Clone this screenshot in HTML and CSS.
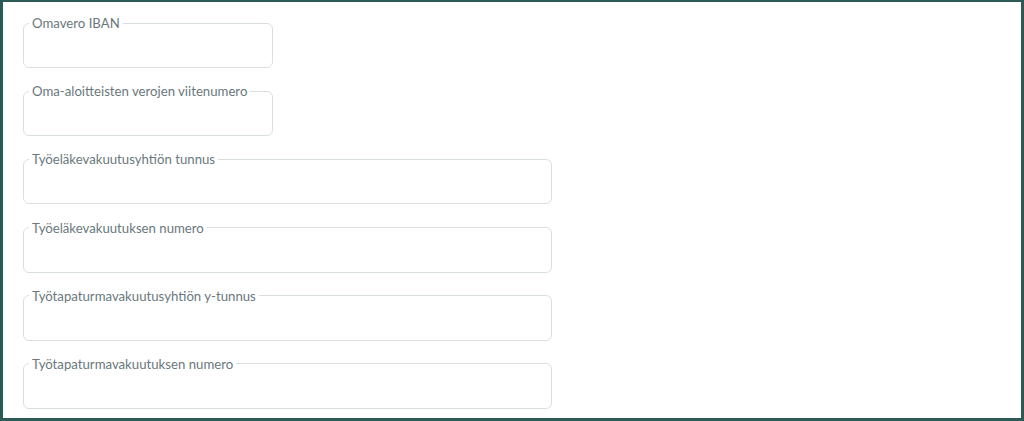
FILE: index.html
```html
<!DOCTYPE html>
<html lang="fi">
<head>
<meta charset="utf-8">
<link rel="stylesheet" href="styles.css">
</head>
<body>
<div class="frame">
  <form class="form">
    <fieldset class="field narrow"><legend>Omavero IBAN</legend></fieldset>
    <fieldset class="field narrow"><legend>Oma-aloitteisten verojen viitenumero</legend></fieldset>
    <fieldset class="field wide"><legend>Työeläkevakuutusyhtiön tunnus</legend></fieldset>
    <fieldset class="field wide"><legend>Työeläkevakuutuksen numero</legend></fieldset>
    <fieldset class="field wide"><legend>Työtapaturmavakuutusyhtiön y-tunnus</legend></fieldset>
    <fieldset class="field wide"><legend>Työtapaturmavakuutuksen numero</legend></fieldset>
  </form>
</div>
</body>
</html>
```

FILE: styles.css
```css
* { box-sizing: border-box; }
html, body { margin: 0; padding: 0; }
body {
  width: 1024px;
  height: 421px;
  overflow: hidden;
  background: #ffffff;
  font-family: "Lato", "Noto Sans", sans-serif;
}
.frame {
  width: 1024px;
  height: 421px;
  border: 3px solid #2c5a55;
  border-top-width: 2px;
  background: #ffffff;
  padding: 13px 0 0 20px;
}
.form {
  display: flex;
  flex-direction: column;
  gap: 15.2px;
}
.field {
  margin: 0;
  padding: 0;
  min-width: 0;
  height: 53px;
  border: 1px solid #d9dfdf;
  border-radius: 6px;
}
.narrow { width: 250px; }
.wide { width: 529px; }
.field legend {
  margin-left: 5px;
  padding: 0 3px;
  font-size: 13.2px;
  line-height: 16px;
  color: #6a787c;
}
```
